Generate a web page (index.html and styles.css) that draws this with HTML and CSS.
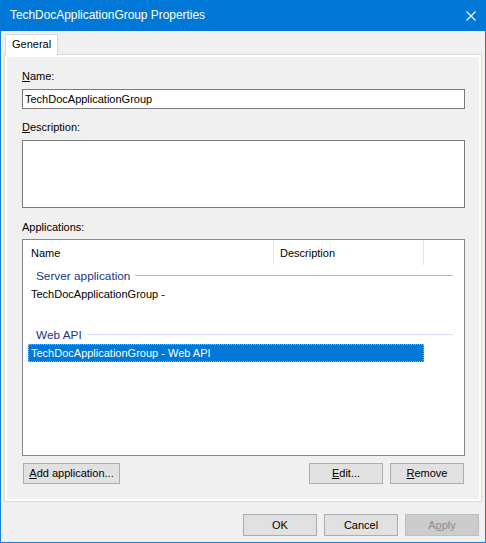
FILE: index.html
```html
<!DOCTYPE html>
<html lang="en">

<head>
    <meta charset="UTF-8">
    <link rel="stylesheet" href="styles.css">
    <title>TechDocApplicationGroup Properties</title>
</head>

<body>

    <div class="window">
        <div class="titlebar">
            <span class="title">TechDocApplicationGroup Properties</span>
            <svg class="close" width="10" height="10" viewBox="0 0 10 10">
                <path d="M0.5 0.5 L9.5 9.5 M9.5 0.5 L0.5 9.5" stroke="#fff" stroke-width="1.1" fill="none"/>
            </svg>
        </div>

        <div class="tabs">
            <div class="tab">General</div>
        </div>

        <div class="page">
            <div class="field-label"><u>N</u>ame:</div>
            <div class="textbox">TechDocApplicationGroup</div>

            <div class="field-label gap"><u>D</u>escription:</div>
            <div class="textbox multi"></div>

            <div class="field-label gap-lg">Applications:</div>
            <div class="listview">
                <div class="lv-header">
                    <div class="col col-name">Name</div>
                    <div class="col col-desc">Description</div>
                </div>

                <div class="group">
                    <span class="group-name">Server application</span>
                    <span class="group-line"></span>
                </div>
                <div class="item">TechDocApplicationGroup -</div>

                <div class="group second">
                    <span class="group-name">Web API</span>
                    <span class="group-line light"></span>
                </div>
                <div class="item selected">TechDocApplicationGroup - Web API</div>
            </div>

            <div class="page-buttons">
                <button class="btn wide"><u>A</u>dd application...</button>
                <span class="spacer"></span>
                <button class="btn"><u>E</u>dit...</button>
                <button class="btn"><u>R</u>emove</button>
            </div>
        </div>

        <div class="footer">
            <button class="btn tall">OK</button>
            <button class="btn tall">Cancel</button>
            <button class="btn tall" disabled>A<u>p</u>ply</button>
        </div>
    </div>

</body>

</html>
```

FILE: styles.css
```css
body {
    margin: 0;
    font-family: 'Liberation Sans', Arial, sans-serif;
    font-size: 11px;
    color: #000;
}

.window {
    width: 486px;
    height: 543px;
    box-sizing: border-box;
    border: 1px solid #1a7fd6;
    border-top: none;
    background: #f0f0f0;
    display: flex;
    flex-direction: column;
}

/* title bar */
.titlebar {
    height: 31px;
    margin: 0 -1px;
    background: #0078d7;
    color: #fff;
    display: flex;
    align-items: center;
    padding: 0 10px 0 10px;
}

.title {
    flex: 1;
    font-size: 11.9px;
    line-height: 31px;
}

.close {
    margin-top: 1px;
}

/* tab strip */
.tabs {
    display: flex;
    margin: 3px 0 -1px 4px;
    position: relative;
    z-index: 1;
}

.tab {
    width: 53px;
    height: 21px;
    box-sizing: border-box;
    border: 1px solid #d9d9d9;
    border-bottom: none;
    background: #fff;
    padding: 0 0 0 6px;
    line-height: 19px;
}

.page {
    margin: 0 3px;
    height: 448px;
    box-sizing: border-box;
    border: 1px solid #d9d9d9;
    box-shadow: inset 0 0 0 2px #fff;
    padding: 14px 16px 17px 17px;
    display: flex;
    flex-direction: column;
}

.field-label {
    line-height: 14px;
    height: 14px;
    margin-bottom: 6px;
}

.field-label.gap {
    margin-top: 11px;
}

.field-label.gap-lg {
    margin-top: 12px;
    margin-bottom: 5px;
}

u {
    text-decoration: underline;
    text-underline-offset: 1px;
}

.textbox {
    height: 20px;
    box-sizing: border-box;
    border: 1px solid #7a7a7a;
    background: #fff;
    padding-left: 2px;
    line-height: 18px;
}

.textbox.multi {
    height: 68px;
}

/* applications list */
.listview {
    height: 217px;
    box-sizing: border-box;
    border: 1px solid #828790;
    background: #fff;
}

.lv-header {
    display: flex;
    height: 25px;
}

.col {
    box-sizing: border-box;
    padding-top: 2px;
    line-height: 23px;
    border-right: 1px solid #e5e5e5;
}

.col-name {
    width: 251px;
    padding-left: 8px;
}

.col-desc {
    width: 150px;
    padding-left: 6px;
}

.group {
    display: flex;
    align-items: center;
    height: 20px;
    padding: 0 11px 0 13px;
    color: #1e3287;
    font-size: 11.8px;
}

.group.second {
    margin-top: 21px;
}

.group-name {
    line-height: 14px;
    margin-top: 1px;
}

.group-line {
    flex: 1;
    height: 1px;
    margin-left: 5px;
    background: #a9b8e2;
}

.group-line.light {
    background: #d6ddf1;
}

.item {
    height: 18px;
    line-height: 18px;
    padding-left: 8px;
}

.item.selected {
    width: 396px;
    margin-left: 5px;
    box-sizing: border-box;
    padding-left: 2px;
    line-height: 16px;
    background: #0078d7;
    color: #fff;
    border: 1px dotted #f0a040;
}

/* buttons */
.page-buttons {
    display: flex;
    gap: 7px;
    margin-top: 7px;
    padding-left: 1px;
    padding-right: 1px;
}

.spacer {
    flex: 1;
}

.btn {
    width: 74px;
    height: 21px;
    box-sizing: border-box;
    border: 1px solid #adadad;
    background: #e1e1e1;
    font-family: inherit;
    font-size: 11px;
    color: #000;
    padding: 0;
    line-height: 19px;
}

.btn.wide {
    width: 97px;
}

.btn.tall {
    height: 22px;
    line-height: 20px;
}

.btn:disabled {
    background: #cccccc;
    border-color: #bfbfbf;
    color: #8d8d8d;
}

.footer {
    display: flex;
    justify-content: flex-end;
    gap: 7px;
    margin-top: 12px;
    padding-right: 6px;
}
```
